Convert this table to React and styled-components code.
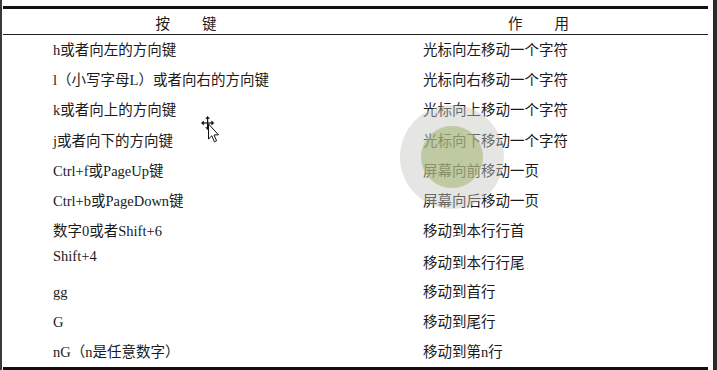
import React from "react";
import styled, { createGlobalStyle } from "styled-components";

const GlobalStyle = createGlobalStyle`
  html, body {
    margin: 0;
    padding: 0;
    background: #ffffff;
  }
  body {
    font-family: "Liberation Serif", "Noto Sans CJK SC", serif;
  }
`;

const rows = [
    { key: "h或者向左的方向键", use: "光标向左移动一个字符" },
    { key: "l（小写字母L）或者向右的方向键", use: "光标向右移动一个字符" },
    { key: "k或者向上的方向键", use: "光标向上移动一个字符" },
    { key: "j或者向下的方向键", use: "光标向下移动一个字符" },
    { key: "Ctrl+f或PageUp键", use: "屏幕向前移动一页" },
    { key: "Ctrl+b或PageDown键", use: "屏幕向后移动一页" },
    { key: "数字0或者Shift+6", use: "移动到本行行首" },
    { key: "Shift+4", use: "移动到本行行尾", keyOffset: -5, useOffset: 2 },
    { key: "gg", use: "移动到首行" },
    { key: "G", use: "移动到尾行" },
    { key: "nG（n是任意数字）", use: "移动到第n行" },
];

function App() {
    return (
        <Frame>
            <GlobalStyle />
            <Table>
                <HeaderRow>
                    <HeadCell>按　　键</HeadCell>
                    <HeadCell>作　　用</HeadCell>
                </HeaderRow>
                <Body>
                    {rows.map((row) => (
                        <Row key={row.key}>
                            <Cell indent={50} offset={row.keyOffset || 0}>{row.key}</Cell>
                            <Cell indent={53} offset={row.useOffset || 0}>{row.use}</Cell>
                        </Row>
                    ))}
                </Body>
            </Table>
            <ClickMark>
                <span />
            </ClickMark>
            <Cursor width="20" height="28" viewBox="0 0 20 28">
                <g fill="#111" stroke="none">
                    <rect x="6" y="2" width="1.2" height="10" />
                    <rect x="1.5" y="6.4" width="10" height="1.2" />
                    <path d="M6.6 0 L9 2.8 L4.2 2.8 Z" />
                    <path d="M6.6 14 L9 11.2 L4.2 11.2 Z" />
                    <path d="M0 7 L2.8 4.6 L2.8 9.4 Z" />
                    <path d="M13.2 7 L10.4 4.6 L10.4 9.4 Z" />
                </g>
                <path
                    d="M7.5 8 L7.5 23 L10.8 19.8 L13.4 25.8 L15.6 24.8 L13 19 L17.5 18.8 Z"
                    fill="#fff"
                    stroke="#111"
                    strokeWidth="1"
                    strokeLinejoin="round"
                />
            </Cursor>
        </Frame>
    );
}

const Frame = styled.div`
position: relative;
width: 717px;
height: 370px;
box-sizing: border-box;
border-left: 2px solid #3a3a3a;
border-right: 4px solid #2b2b2b;
overflow: hidden;
background: #fff;
`;

const Table = styled.div`
margin: 6px 0 0 1px;
width: 705px;
border-top: 3px solid #111;
border-bottom: 3px solid #111;
color: #1b1b1b;
`;

const HeaderRow = styled.div`
display: grid;
grid-template-columns: 367px 1fr;
height: 25px;
border-bottom: 1.5px solid #222;
`;

const HeadCell = styled.div`
display: flex;
align-items: center;
justify-content: center;
font-size: 14.5px;
letter-spacing: 1px;
padding-top: 1px;
`;

const Body = styled.div`
display: flex;
flex-direction: column;
`;

const Row = styled.div`
display: grid;
grid-template-columns: 367px 1fr;
height: 30.2px;
align-items: center;
`;

const Cell = styled.div`
padding-left: ${(p) => p.indent}px;
font-size: 14.5px;
line-height: 18px;
white-space: nowrap;
transform: translateY(${(p) => p.offset}px);
`;

const ClickMark = styled.div`
position: absolute;
left: 398px;
top: 105px;
width: 104px;
height: 104px;
border-radius: 50%;
background: rgba(198, 198, 192, 0.45);
display: flex;
align-items: center;
justify-content: center;
pointer-events: none;
span {
    width: 62px;
    height: 62px;
    border-radius: 50%;
    background: rgba(160, 178, 110, 0.55);
}
`;

const Cursor = styled.svg`
position: absolute;
left: 199px;
top: 116px;
`;

export default App;
